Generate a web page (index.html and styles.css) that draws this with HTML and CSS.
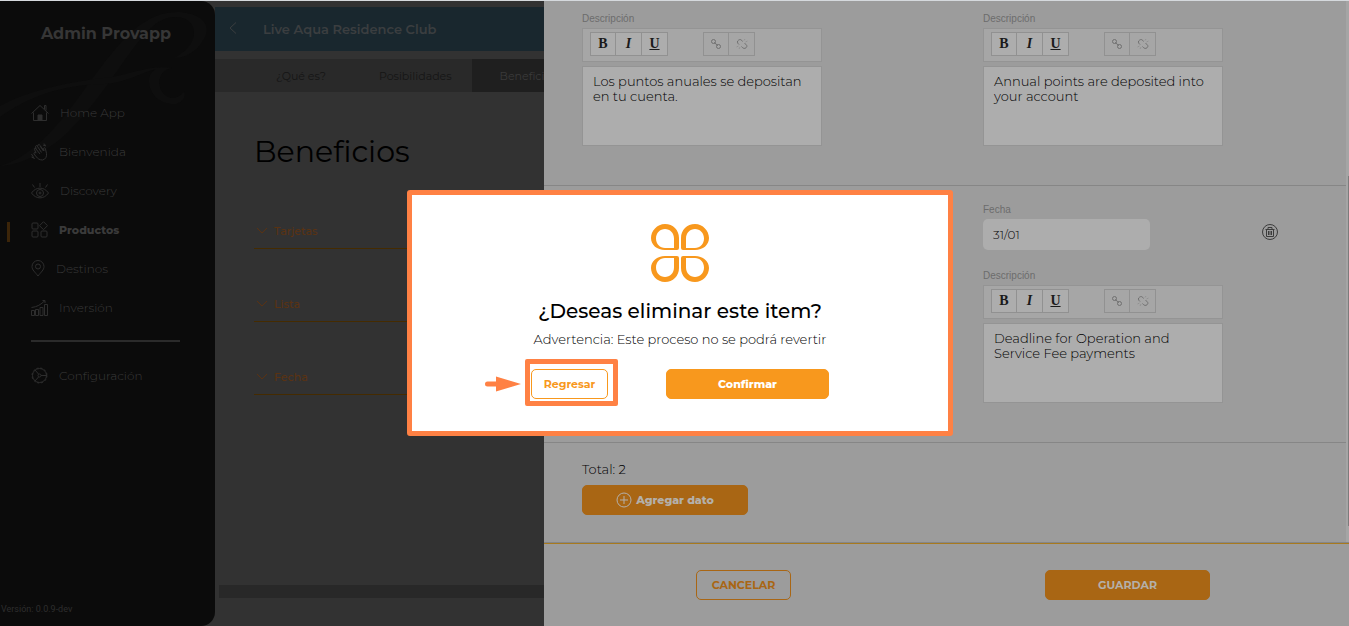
FILE: index.html
```html
<!DOCTYPE html>
<html lang="es">
<head>
    <meta charset="UTF-8">
    <meta name="viewport" content="width=device-width, initial-scale=1.0">
    <title>Admin Provapp</title>
    <link rel="stylesheet" href="styles.css">
</head>

<body>
    <div class="app">
        <aside class="sidebar">
            <svg class="watermark" viewBox="0 0 215 170" aria-hidden="true">
                <path d="M0 165C50 150 80 90 112 52C135 24 155 10 180 11C202 13 212 24 204 38C196 52 184 57 174 57C188 50 197 38 193 26C189 14 168 12 153 25C130 45 105 95 68 131C47 151 22 164 0 165Z"/>
                <path d="M0 105C30 88 80 79 112 76C135 72 150 64 172 67C160 69 157 80 161 89C166 99 178 100 184 90C186 96 183 101 176 103C160 104 149 93 149 80C149 74 152 70 156 68C140 72 125 82 105 83C60 83 25 98 0 116Z"/>
            </svg>
            <h1 class="brand">Admin Provapp</h1>
            <nav class="menu">
                <a href="#" class="menu-item">
                    <svg width="18" height="18" viewBox="0 0 18 18"><path d="M.5 9.500 9 1.500l8.500 8M2.500 8.500v8h13v-8M13.500 5V1.500h1.500v5"/><path class="fill" d="M7 11h4v5H7z"/></svg>
                    <span>Home App</span>
                </a>
                <a href="#" class="menu-item">
                    <svg width="17" height="18" viewBox="0 0 17 18"><path d="M5 10 3.500 6.500C3 5 4.500 4.500 5 6L4.500 3.500C5 2 6 2.500 6.500 3.500L7 2C8 1 9 2 9.500 3L13 8l-.5-2.500c.5-1.500 2-.5 2 .5l1 4.500c.5 3-1 6-4 6.500-3 0-5-1.500-6-3l-2.500-3c-.5-1.500 1-2 2-1zM5 6l4 5M6.500 3.500l4 6M9 3l3.500 5M12 2l3 1M13 .500l1.500 2M.5 11l3 5M.5 14l2 1"/></svg>
                    <span>Bienvenida</span>
                </a>
                <a href="#" class="menu-item">
                    <svg width="18" height="18" viewBox="0 0 18 18"><path d="M.500 11C5 4.500 13 4.500 17.500 11 13 17.500 5 17.500.500 11z"/><circle cx="9" cy="11" r="3.500"/><circle cx="9" cy="11" r="1"/><path d="M9 1v4M1.500 2.500l2 3M16.500 2.500l-2 3"/></svg>
                    <span>Discovery</span>
                </a>
                <a href="#" class="menu-item active">
                    <svg width="17" height="17" viewBox="0 0 17 17"><rect x="1" y="2" width="6" height="6" rx="1"/><rect x="1" y="10" width="6" height="6" rx="1"/><rect x="10" y="10" width="6" height="6" rx="1"/><path d="m12.500.700 4 4-4 4-4-4z"/></svg>
                    <span>Productos</span>
                </a>
                <a href="#" class="menu-item">
                    <svg width="14" height="17" viewBox="0 0 14 17"><path d="M7 16C4 12 1 10 1 6.500a6 6 0 0 1 12 0C13 10 10 12 7 16z"/><circle cx="7" cy="6.500" r="2.500"/></svg>
                    <span>Destinos</span>
                </a>
                <a href="#" class="menu-item">
                    <svg width="17" height="17" viewBox="0 0 17 17"><path d="M.500 16.500v-5h3v5zM4.500 16.500v-6h3v6zM9 16.500v-8h3v8zM13.500 16.500v-11h3v11zM.500 8.500C6 8 10 5.500 14 1.500M11.500 1.500H14V4"/></svg>
                    <span>Inversión</span>
                </a>
            </nav>
            <hr class="menu-line">
            <a href="#" class="menu-item">
                <svg width="17" height="17" viewBox="0 0 17 17"><circle cx="8.500" cy="8.500" r="7"/><circle cx="8.500" cy="8.500" r="7.500" stroke-dasharray="2 2"/><circle cx="8.500" cy="8.500" r="1.500"/><path d="M7.500 7 4 3M10 8.500h6M7.500 10 4 14"/></svg>
                <span>Configuración</span>
            </a>
            <p class="version">Versión: 0.0.9-dev</p>
        </aside>

        <main class="main">
            <header class="topbar">
                <a href="#" class="back" aria-label="Regresar">
                    <svg width="8" height="12" viewBox="0 0 8 12"><path d="M7 .500 1 6l6 5.500"/></svg>
                </a>
                <h2>Live Aqua Residence Club</h2>
            </header>
            <nav class="tabs">
                <a href="#">¿Qué es?</a>
                <a href="#">Posibilidades</a>
                <a href="#" class="selected">Beneficios</a>
            </nav>
            <section class="benefits">
                <h3>Beneficios</h3>
                <button type="button" class="accordion"><svg width="12" height="8" viewBox="0 0 12 8"><path d="m1 1 5 5 5-5"/></svg>Tarjetas</button>
                <button type="button" class="accordion"><svg width="12" height="8" viewBox="0 0 12 8"><path d="m1 1 5 5 5-5"/></svg>Lista</button>
                <button type="button" class="accordion"><svg width="12" height="8" viewBox="0 0 12 8"><path d="m1 1 5 5 5-5"/></svg>Fecha</button>
            </section>
            <div class="bottom-bar"></div>
        </main>

        <section class="drawer">
            <div class="drawer-body">
                <div class="items">
                    <div class="item first">
                        <div class="field">
                            <label for="desc-es">Descripción</label>
                            <div class="toolbar">
                                <div class="group">
                                    <button type="button"><b>B</b></button>
                                    <button type="button"><i>I</i></button>
                                    <button type="button"><u>U</u></button>
                                </div>
                                <div class="group">
                                    <button type="button" aria-label="Enlace"><svg width="12" height="12" viewBox="0 0 12 12"><circle cx="3.500" cy="3.500" r="2"/><circle cx="8.500" cy="8.500" r="2"/><path d="m4 4.500 4 3"/></svg></button>
                                    <button type="button" aria-label="Quitar enlace"><svg width="12" height="12" viewBox="0 0 12 12"><path d="M3 6.500C1 5 1 3 2.500 2.200 4 1 5.500 1.500 6.500 3.500M8.500 5.500C11 6.500 11.500 8.500 10 9.800 8.500 11 7 10.500 5.500 8.500"/><path class="rays" d="M8 2.500 9 1M9.500 4l2-1M4 9l-1 2M2.500 8 .500 9"/></svg></button>
                                </div>
                            </div>
                            <textarea id="desc-es">Los puntos anuales se depositan en tu cuenta.</textarea>
                        </div>
                        <div class="field">
                            <label for="desc-en">Descripción</label>
                            <div class="toolbar">
                                <div class="group">
                                    <button type="button"><b>B</b></button>
                                    <button type="button"><i>I</i></button>
                                    <button type="button"><u>U</u></button>
                                </div>
                                <div class="group">
                                    <button type="button" aria-label="Enlace"><svg width="12" height="12" viewBox="0 0 12 12"><circle cx="3.500" cy="3.500" r="2"/><circle cx="8.500" cy="8.500" r="2"/><path d="m4 4.500 4 3"/></svg></button>
                                    <button type="button" aria-label="Quitar enlace"><svg width="12" height="12" viewBox="0 0 12 12"><path d="M3 6.500C1 5 1 3 2.500 2.200 4 1 5.500 1.500 6.500 3.500M8.500 5.500C11 6.500 11.500 8.500 10 9.800 8.500 11 7 10.500 5.500 8.500"/><path class="rays" d="M8 2.500 9 1M9.500 4l2-1M4 9l-1 2M2.500 8 .500 9"/></svg></button>
                                </div>
                            </div>
                            <textarea id="desc-en">Annual points are deposited into your account</textarea>
                        </div>
                    </div>
                    <div class="item">
                        <div class="field english">
                            <label for="date-en">Fecha</label>
                            <input type="text" id="date-en" class="date" value="31/01">
                            <label for="desc-en-2">Descripción</label>
                            <div class="toolbar">
                                <div class="group">
                                    <button type="button"><b>B</b></button>
                                    <button type="button"><i>I</i></button>
                                    <button type="button"><u>U</u></button>
                                </div>
                                <div class="group">
                                    <button type="button" aria-label="Enlace"><svg width="12" height="12" viewBox="0 0 12 12"><circle cx="3.500" cy="3.500" r="2"/><circle cx="8.500" cy="8.500" r="2"/><path d="m4 4.500 4 3"/></svg></button>
                                    <button type="button" aria-label="Quitar enlace"><svg width="12" height="12" viewBox="0 0 12 12"><path d="M3 6.500C1 5 1 3 2.500 2.200 4 1 5.500 1.500 6.500 3.500M8.500 5.500C11 6.500 11.500 8.500 10 9.800 8.500 11 7 10.500 5.500 8.500"/><path class="rays" d="M8 2.500 9 1M9.500 4l2-1M4 9l-1 2M2.500 8 .500 9"/></svg></button>
                                </div>
                            </div>
                            <textarea id="desc-en-2">Deadline for Operation and Service Fee payments</textarea>
                        </div>
                        <button type="button" class="trash" aria-label="Eliminar">
                            <svg width="16" height="16" viewBox="0 0 16 16"><circle cx="8" cy="8" r="7.500"/><path d="M3.500 5.500h9M4.500 5.500v7h7v-7M6 5.500v-2h4v2M6.500 7v4M8 7v4M9.500 7v4"/></svg>
                        </button>
                    </div>
                    <div class="total">
                        <p>Total: 2</p>
                        <button type="button" class="btn btn-dim btn-add">
                            <svg width="16" height="16" viewBox="0 0 16 16"><circle cx="8" cy="8" r="7"/><path d="M8 4v8M4 8h8"/></svg>
                            Agregar dato
                        </button>
                    </div>
                </div>
                <div class="track"><div class="thumb"></div></div>
            </div>
            <footer class="drawer-footer">
                <button type="button" class="btn btn-cancel">CANCELAR</button>
                <button type="button" class="btn btn-dim">GUARDAR</button>
            </footer>
        </section>
    </div>

    <div class="overlay">
        <div class="modal" role="dialog" aria-labelledby="modal-title">
            <svg class="logo" width="58" height="58" viewBox="0 0 58 58" aria-hidden="true">
                <defs>
                    <path id="petal" fill-rule="evenodd" d="M14 0C22 0 28 6 28 14V24Q28 26 26 26H14C6 26 0 21 0 14S6 0 14 0ZM14 5C9 5 5 9 5 14.500C5 20 9 24 14 24H23V14.500C23 9 19 5 14 5Z"/>
                </defs>
                <use href="#petal"/>
                <use href="#petal" transform="matrix(-1 0 0 1 58 0)"/>
                <use href="#petal" transform="matrix(1 0 0 -1 0 58)"/>
                <use href="#petal" transform="matrix(-1 0 0 -1 58 58)"/>
            </svg>
            <h2 id="modal-title">¿Deseas eliminar este item?</h2>
            <p>Advertencia: Este proceso no se podrá revertir</p>
            <div class="actions">
                <div class="marked">
                    <svg class="arrow" width="36" height="16" viewBox="0 0 36 16" aria-hidden="true"><path d="M2.500 5.500H11V.500L36 8 11 15.500v-5H2.500a2.500 2.500 0 0 1 0-5z"/></svg>
                    <button type="button" class="btn btn-back">Regresar</button>
                </div>
                <button type="button" class="btn btn-confirm">Confirmar</button>
            </div>
        </div>
    </div>
</body>
</html>
```
FILE: styles.css
```css
* {
    box-sizing: border-box;
    margin: 0;
    padding: 0;
}

:root {
    --orange: #f8981d;
    --orangedim: #a96614;
    --mark: #ff8144;
    --grey: #9c9c9c;
}

body {
    font-family: Montserrat, Inter, sans-serif;
    font-size: 12px;
    background: #323232;
    border-top: 1px solid #d5d9dd;
    overflow: hidden;
}

a {
    color: inherit;
    text-decoration: none;
}

button,
input,
textarea {
    font-family: inherit;
}

button {
    cursor: pointer;
}

svg {
    flex: none;
    fill: none;
    stroke: currentColor;
}

.app {
    display: grid;
    grid-template-columns: 215px 329px 1fr;
    min-height: calc(100vh - 1px);
}

/* sidebar */
.sidebar {
    position: relative;
    display: flex;
    flex-direction: column;
    background: #0b0b0b;
    color: #2e2e2e;
    border-radius: 0 14px 14px 0;
}

.watermark {
    position: absolute;
    top: 0;
    left: 0;
    width: 215px;
    fill: #0e0e0e;
    stroke: none;
}

.brand {
    position: relative;
    padding: 21px 3px 0 0;
    font-size: 16px;
    line-height: 24px;
    text-align: center;
    color: #363636;
}

.menu {
    position: relative;
    padding-top: 47px;
}

.menu-item {
    display: flex;
    align-items: center;
    gap: 11px;
    height: 39px;
    padding-left: 31px;
    font-size: 12px;
    font-weight: 300;
}

.menu-item span {
    color: #3a3a3a;
}

.menu-item .fill {
    fill: currentColor;
}

.menu-item.active {
    position: relative;
    font-size: 11px;
    font-weight: 800;
}

.menu-item.active::before {
    content: "";
    position: absolute;
    left: 7px;
    top: 12px;
    width: 3px;
    height: 20px;
    background: #3c2509;
}

.menu-line {
    width: 149px;
    margin: 13px 0 14px 31px;
    border: 0;
    border-top: 2px solid #2b2b2b;
}

.version {
    margin: auto 0 10px 1px;
    font-family: Roboto, sans-serif;
    font-size: 9px;
    line-height: 14px;
}

/* main column */
.main {
    display: flex;
    flex-direction: column;
    min-width: 0;
    overflow: hidden;
    padding-top: 6px;
}

.topbar {
    display: flex;
    align-items: center;
    gap: 26px;
    height: 44px;
    padding-left: 14px;
    background: #19272e;
    color: #3b3e40;
}

.topbar h2 {
    font-size: 13px;
    font-weight: 600;
}

.tabs {
    display: flex;
    height: 33px;
    margin-top: 8px;
    background: #292929;
    font-size: 11px;
    color: #151515;
}

.tabs a {
    flex: none;
    padding-left: 61px;
    line-height: 34px;
}

.tabs a + a {
    padding: 0 20px 0 53px;
}

.tabs a.selected {
    padding: 0 28px;
    background: #1f1f1f;
    color: #3a3a3a;
}

.benefits {
    padding: 36px 0 0 39px;
}

.benefits h3 {
    margin-bottom: 37px;
    font-size: 30px;
    line-height: 48px;
    font-weight: 400;
    color: #000;
}

.accordion {
    display: flex;
    align-items: center;
    gap: 6px;
    width: 100%;
    height: 36px;
    margin-bottom: 37px;
    padding-left: 2px;
    border: 0;
    border-bottom: 1px solid #452b00;
    background: none;
    font-size: 11px;
    font-weight: 500;
    color: #5a3212;
}

.bottom-bar {
    height: 13px;
    margin: auto 0 28px 4px;
    background: #282828;
}

/* drawer */
.drawer {
    display: flex;
    flex-direction: column;
    background: var(--grey);
}

.drawer-body {
    display: flex;
    flex: 1;
    border-bottom: 1px solid #868686;
}

.items {
    flex: 1;
}

.item {
    display: grid;
    grid-template-columns: 401fr 279fr 84fr;
    align-items: start;
    padding: 15px 0 39px 38px;
    border-bottom: 1px solid #868686;
}

.item.first {
    padding-top: 9px;
}

.field {
    width: 240px;
}

.field.english {
    grid-column: 2;
}

.field label {
    display: block;
    font-family: "Liberation Sans", Arial, sans-serif;
    font-size: 10px;
    line-height: 18px;
    color: #6c6c6c;
}

.date {
    display: block;
    width: 167px;
    height: 31px;
    margin-bottom: 17px;
    padding: 0 10px;
    border: 0;
    border-radius: 5px;
    background: #adadad;
    font-size: 12px;
    font-weight: 300;
    color: #000;
}

.toolbar {
    display: flex;
    gap: 35px;
    height: 34px;
    margin-bottom: 4px;
    padding: 3px 7px;
    border: 1px solid #949494;
    background: #a6a6a6;
}

.group {
    display: flex;
}

.group button {
    display: flex;
    align-items: center;
    justify-content: center;
    width: 26px;
    height: 24px;
    border: 1px solid #919191;
    background: #adadad;
    font-family: "Liberation Serif", serif;
    font-size: 14px;
    font-weight: 700;
    color: #1a1a1a;
}

.group button + button {
    border-left: 0;
}

.group button svg {
    color: #707070;
}

.group .rays {
    stroke: #929292;
}

.group + .group button {
    background: #a6a6a6;
}

textarea {
    display: block;
    width: 100%;
    height: 80px;
    padding: 7px 14px 7px 10px;
    border: 1px solid #949494;
    background: #adadad;
    font-size: 13px;
    line-height: 15px;
    font-weight: 300;
    color: #000;
    resize: none;
}

.trash {
    width: 16px;
    height: 16px;
    margin-top: 23px;
    border: 0;
    background: none;
    color: #3c3c3c;
}

.total {
    padding: 16px 0 27px 38px;
}

.total p {
    margin-bottom: 6px;
    font-size: 13px;
    line-height: 20px;
    font-weight: 300;
    color: #000;
}

.track {
    width: 3px;
    padding: 175px 0 0 2px;
    background: #a5a5a5;
}

.thumb {
    height: 350px;
    background: #7c7c7c;
}

.drawer-footer {
    display: flex;
    justify-content: space-between;
    height: 83px;
    padding: 26px 139px 0 152px;
    border-top: 1px solid #a87a1e;
}

.btn {
    display: flex;
    align-items: center;
    justify-content: center;
    gap: 4px;
    height: 30px;
    border: 1px solid var(--orange);
    border-radius: 5px;
    font-size: 11px;
    font-weight: 700;
}

.btn-dim {
    width: 165px;
    border-color: var(--orangedim);
    background: var(--orangedim);
    color: #b4b0aa;
}

.btn-add {
    width: 166px;
    font-weight: 800;
}

.btn-cancel {
    width: 95px;
    border-color: var(--orangedim);
    background: none;
    color: var(--orangedim);
}

/* confirm modal */
.overlay {
    position: fixed;
    inset: 0;
    display: flex;
    align-items: center;
    justify-content: center;
    padding-left: 11px;
}

.modal {
    display: flex;
    flex-direction: column;
    align-items: center;
    width: 546px;
    padding: 29px 20px 32px;
    border: 5px solid var(--mark);
    border-radius: 3px;
    background: #fff;
}

.logo {
    fill: var(--orange);
    stroke: none;
}

.modal h2 {
    margin-top: 17px;
    font-size: 20px;
    line-height: 24px;
    font-weight: 500;
    color: #000;
}

.modal p {
    margin: 6px 0 20px;
    font-size: 13px;
    line-height: 20px;
    font-weight: 300;
    color: #000;
}

.actions {
    display: flex;
    gap: 58px;
}

.marked {
    position: relative;
}

.marked::after {
    content: "";
    position: absolute;
    inset: -10px -10px -7px -6px;
    border: 5px solid var(--mark);
    border-radius: 2px;
    pointer-events: none;
}

.arrow {
    position: absolute;
    top: 7px;
    left: -46px;
    fill: var(--mark);
    stroke: none;
}

.btn-back {
    width: 77px;
    background: #fff;
    color: var(--orange);
}

.btn-confirm {
    width: 163px;
    background: var(--orange);
    font-weight: 800;
    color: #fff;
}
```
